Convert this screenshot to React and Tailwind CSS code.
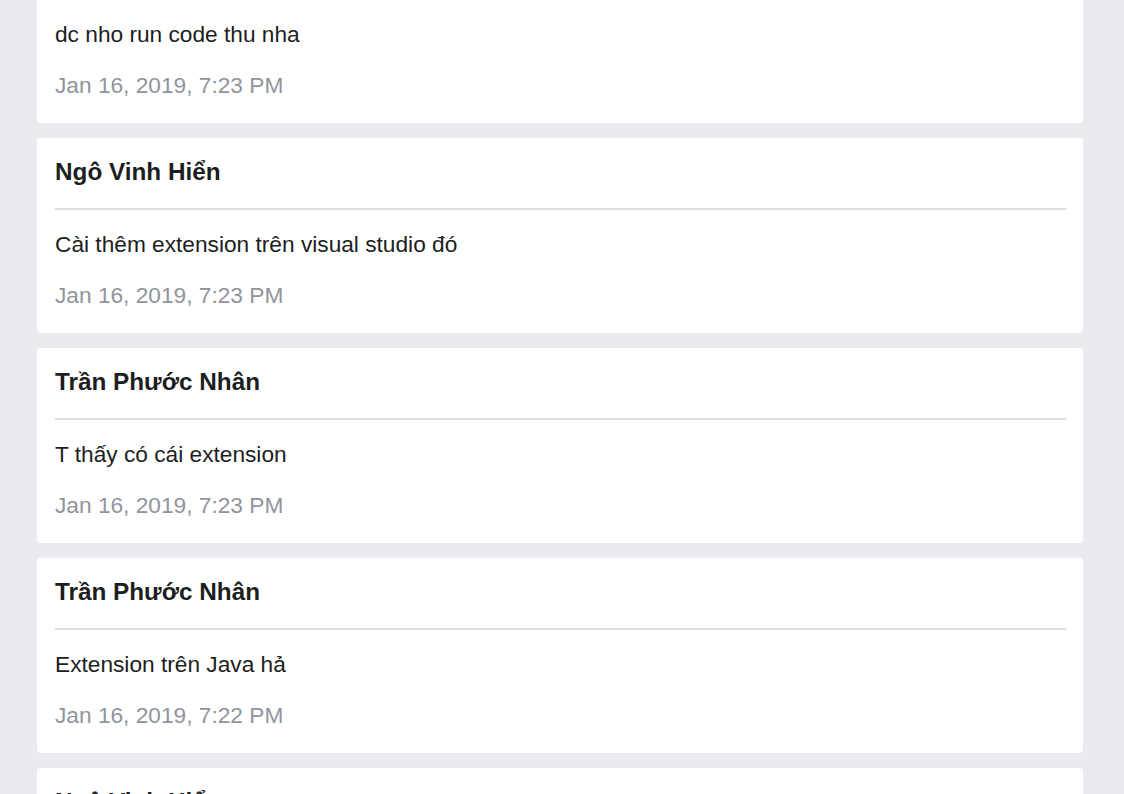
import React from "react";

const messages = [
  { name: "Ngô Vinh Hiển", text: "dc nho run code thu nha", time: "Jan 16, 2019, 7:23 PM" },
  { name: "Ngô Vinh Hiển", text: "Cài thêm extension trên visual studio đó", time: "Jan 16, 2019, 7:23 PM" },
  { name: "Trần Phước Nhân", text: "T thấy có cái extension", time: "Jan 16, 2019, 7:23 PM" },
  { name: "Trần Phước Nhân", text: "Extension trên Java hả", time: "Jan 16, 2019, 7:22 PM" },
  { name: "Ngô Vinh Hiển", text: "Ừ", time: "Jan 16, 2019, 7:22 PM" },
];

// One message card
function MessageCard({ name, text, time }) {
  return (
    <div className="rounded-[4px] bg-white pl-[18px] pr-[17px] pt-[19px] pb-[23px]">
      <div className="border-b-2 border-[#dadde1] pb-[21px] text-[24.3px] font-bold leading-[30px] text-[#1c1e21]">
        {name}
      </div>
      <div className="mt-[19px] text-[22.7px] leading-[30px] text-[#1c1e21]">{text}</div>
      <div className="mt-[21px] text-[22.7px] leading-[30px] text-[#90949c]">{time}</div>
    </div>
  );
}

export default function App() {
  return (
    <div
      className="h-[794px] overflow-hidden bg-[#e9ebee]"
      style={{ fontFamily: '"Liberation Sans", Arial, sans-serif' }}
    >
      <div className="-mt-[72px] flex flex-col gap-[15px] pl-[37px] pr-[41px]">
        {messages.map((m, idx) => (
          <MessageCard key={idx} {...m} />
        ))}
      </div>
    </div>
  );
}
